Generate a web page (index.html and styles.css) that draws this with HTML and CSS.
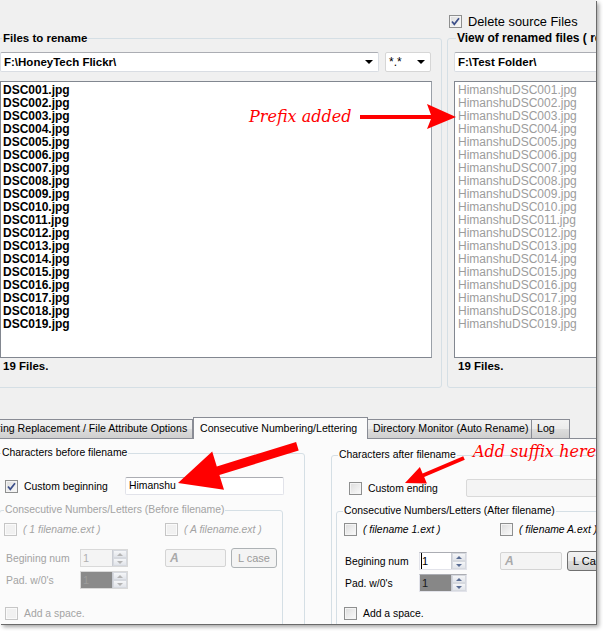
FILE: index.html
```html
<!DOCTYPE html>
<html lang="en">
<head>
    <meta charset="UTF-8">
    <title>Bulk File Renamer</title>
    <link rel="stylesheet" href="styles.css">
</head>
<body>
<div class="screen">
    <div class="window">
        <div class="top">
            <fieldset class="group source">
                <legend>Files to rename</legend>
                <div class="path-row">
                    <div class="combo path">F:\HoneyTech Flickr\<span class="drop"></span></div>
                    <div class="combo filter">*.*<span class="drop"></span></div>
                </div>
                <div class="list">
                    <div>DSC001.jpg</div>
                    <div>DSC002.jpg</div>
                    <div>DSC003.jpg</div>
                    <div>DSC004.jpg</div>
                    <div>DSC005.jpg</div>
                    <div>DSC006.jpg</div>
                    <div>DSC007.jpg</div>
                    <div>DSC008.jpg</div>
                    <div>DSC009.jpg</div>
                    <div>DSC010.jpg</div>
                    <div>DSC011.jpg</div>
                    <div>DSC012.jpg</div>
                    <div>DSC013.jpg</div>
                    <div>DSC014.jpg</div>
                    <div>DSC015.jpg</div>
                    <div>DSC016.jpg</div>
                    <div>DSC017.jpg</div>
                    <div>DSC018.jpg</div>
                    <div>DSC019.jpg</div>
                </div>
                <div class="status">19 Files.</div>
            </fieldset>

            <div class="target-col">
                <div class="check-row delete">
                    <span class="cb on"><svg viewBox="0 0 11 11"><path d="M2 5.5l2.3 2.8L9 2.2"/></svg></span>
                    <span>Delete source Files</span>
                </div>
                <fieldset class="group target">
                    <legend>View of renamed files ( read only )</legend>
                    <div class="combo path">F:\Test Folder\</div>
                    <div class="list renamed">
                        <div>HimanshuDSC001.jpg</div>
                        <div>HimanshuDSC002.jpg</div>
                        <div>HimanshuDSC003.jpg</div>
                        <div>HimanshuDSC004.jpg</div>
                        <div>HimanshuDSC005.jpg</div>
                        <div>HimanshuDSC006.jpg</div>
                        <div>HimanshuDSC007.jpg</div>
                        <div>HimanshuDSC008.jpg</div>
                        <div>HimanshuDSC009.jpg</div>
                        <div>HimanshuDSC010.jpg</div>
                        <div>HimanshuDSC011.jpg</div>
                        <div>HimanshuDSC012.jpg</div>
                        <div>HimanshuDSC013.jpg</div>
                        <div>HimanshuDSC014.jpg</div>
                        <div>HimanshuDSC015.jpg</div>
                        <div>HimanshuDSC016.jpg</div>
                        <div>HimanshuDSC017.jpg</div>
                        <div>HimanshuDSC018.jpg</div>
                        <div>HimanshuDSC019.jpg</div>
                    </div>
                    <div class="status">19 Files.</div>
                </fieldset>
            </div>
        </div>

        <div class="tabs">
            <div class="tab t-replace">String Replacement / File Attribute Options</div>
            <div class="tab t-number active">Consecutive Numbering/Lettering</div>
            <div class="tab t-monitor">Directory Monitor (Auto Rename)</div>
            <div class="tab t-log">Log</div>
        </div>

        <div class="page">
            <!-- prefix side -->
            <fieldset class="group chars before">
                <legend>Characters before filename</legend>
                <div class="custom-row">
                    <span class="cb on"><svg viewBox="0 0 11 11"><path d="M2 5.5l2.3 2.8L9 2.2"/></svg></span>
                    <span class="custom-label">Custom beginning</span>
                    <div class="textbox">Himanshu</div>
                </div>
                <fieldset class="group seq disabled">
                    <legend>Consecutive Numbers/Letters (Before filename)</legend>
                    <div class="opts">
                        <div class="opt"><span class="cb dis"></span><i>( 1 filename.ext )</i></div>
                        <div class="opt"><span class="cb dis"></span><i>( A filename.ext )</i></div>
                    </div>
                    <div class="nums">
                        <span class="num-label">Begining num</span>
                        <div class="spin dis"><span class="spin-val">1</span><span class="spin-btns"><b class="up"></b><b class="down"></b></span></div>
                        <div class="letter dis">A</div>
                        <div class="button dis">L case</div>
                        <span class="num-label">Pad. w/0's</span>
                        <div class="spin dis dark"><span class="spin-val">1</span><span class="spin-btns"><b class="up"></b><b class="down"></b></span></div>
                    </div>
                    <div class="space-row"><span class="cb dis"></span><span>Add a space.</span></div>
                </fieldset>
            </fieldset>

            <!-- suffix side -->
            <fieldset class="group chars after">
                <legend>Characters after filename</legend>
                <div class="custom-row">
                    <span class="cb"></span>
                    <span class="custom-label">Custom ending</span>
                    <div class="textbox dis"></div>
                </div>
                <fieldset class="group seq">
                    <legend>Consecutive Numbers/Letters (After filename)</legend>
                    <div class="opts">
                        <div class="opt"><span class="cb"></span><i>( filename 1.ext )</i></div>
                        <div class="opt"><span class="cb"></span><i>( filename A.ext )</i></div>
                    </div>
                    <div class="nums">
                        <span class="num-label">Begining num</span>
                        <div class="spin"><span class="spin-val caret">1</span><span class="spin-btns"><b class="up"></b><b class="down"></b></span></div>
                        <div class="letter dis">A</div>
                        <div class="button">L Case</div>
                        <span class="num-label">Pad. w/0's</span>
                        <div class="spin dark"><span class="spin-val">1</span><span class="spin-btns"><b class="up"></b><b class="down"></b></span></div>
                    </div>
                    <div class="space-row"><span class="cb"></span><span>Add a space.</span></div>
                </fieldset>
            </fieldset>
        </div>
    </div>

    <!-- red callouts drawn over the window -->
    <svg class="marks" width="603" height="631" viewBox="0 0 603 631">
        <polygon points="360,115 431,115 427,104 456,117 427,129 431,119 360,119"/>
        <polygon points="464.8,459.8 424.2,477 426.9,483.5 405,483 419.9,466.9 422.6,473.4 463.2,456.2"/>
        <polygon points="298.7,450.5 219.4,475 224,489.8 178,483 212.2,451.6 216.8,466.4 296.1,442"/>
    </svg>
    <span class="note prefix">Prefix added</span>
    <span class="note suffix">Add suffix here</span>
</div>
</body>
</html>
```

FILE: styles.css
```css
:root {
    --face: #f0f0f0;
    --page: #fbfbfb;
    --group-line: #d5dfe5;
    --field-line: #abadb3;
    --tab-line: #898c95;
    --muted: #a3a3a3;
    --note-red: #ff0000;
}

* {
    margin: 0;
    padding: 0;
    box-sizing: border-box;
}

body {
    margin: 0;
    background: #fff;
    font-family: "Liberation Sans", Arial, sans-serif;
    font-size: 11px;
    color: #000;
}

.screen {
    position: relative;
    width: 603px;
    height: 631px;
    overflow: hidden;
}

.window {
    width: 596px;
    height: 624px;
    background: var(--face);
    overflow: hidden;
    display: flex;
    flex-direction: column;
    box-shadow: 1px 1px 0 #6a6a6a, 3px 3px 4px rgba(0, 0, 0, 0.35);
}

/* ---------- group boxes ---------- */

.group {
    flex-shrink: 0;
    border: 1px solid var(--group-line);
    border-radius: 3px;
    min-width: 0;
    padding: 0;
}

.group > legend {
    padding: 0 1px;
    line-height: 14px;
    white-space: nowrap;
}

/* ---------- top half: source and target lists ---------- */

.top {
    display: flex;
    height: 417px;
    flex-shrink: 0;
}

.source {
    margin: 31px 0 0 -4px;
    width: 446px;
    height: 357px;
    padding: 7px 0 0 3px;
}

.source > legend,
.target > legend {
    margin-left: 2px;
    font-weight: bold;
}

.source > legend {
    font-size: 11.5px;
}

.target > legend {
    font-size: 12px;
}

.path-row {
    display: flex;
    gap: 6px;
    height: 20px;
}

.combo {
    position: relative;
    flex-shrink: 0;
    height: 20px;
    background: #fff;
    border: 1px solid #d9dde3;
    border-top-color: var(--field-line);
    border-radius: 2px;
    padding-left: 3px;
    line-height: 18px;
    font-weight: bold;
    font-size: 11.5px;
    white-space: nowrap;
}

.combo.path {
    width: 379px;
}

.combo.filter {
    width: 46px;
    border-color: #d6d6d6;
    font-weight: normal;
    font-size: 12px;
}

.target .combo.path {
    width: 170px;
}

.drop {
    position: absolute;
    right: 5px;
    top: 7px;
    border-left: 4px solid transparent;
    border-right: 4px solid transparent;
    border-top: 4px solid #000;
}

.list {
    width: 432px;
    height: 277px;
    margin-top: 9px;
    background: #fff;
    border: 1px solid #828790;
    border-right-color: #9aa0a8;
    padding: 2px 0 0 2px;
    font-weight: bold;
    font-size: 12px;
    line-height: 13px;
}

.status {
    margin-top: 1px;
    padding-left: 3px;
    line-height: 14px;
    font-weight: bold;
    font-size: 11.5px;
}

.target-col {
    flex-shrink: 0;
    margin-left: 5px;
    display: flex;
    flex-direction: column;
}

.check-row {
    display: flex;
    align-items: center;
    gap: 6px;
}

.delete {
    margin-top: 14px;
    height: 14px;
    padding-left: 2px;
    font-size: 12.8px;
}

.target {
    margin-top: 3px;
    width: 170px;
    height: 357px;
    padding: 7px 0 0 6px;
}

.list.renamed {
    width: 170px;
    padding-left: 3px;
    font-weight: normal;
    font-size: 12px;
    color: #9c9c9c;
}

.target .status {
    padding-left: 4px;
}

/* ---------- checkboxes ---------- */

.cb {
    flex-shrink: 0;
    width: 13px;
    height: 13px;
    border: 1px solid #8e8f8f;
    background: linear-gradient(135deg, #dcdcdc, #fbfbfb);
    box-shadow: inset 0 0 0 1px #f4f4f4;
    display: flex;
    align-items: center;
    justify-content: center;
}

.cb svg {
    width: 11px;
    height: 11px;
}

.cb path {
    fill: none;
    stroke: #3c4f8a;
    stroke-width: 1.7;
}

.cb.dis {
    border-color: #c6c6c6;
    background: #f1f1f1;
    box-shadow: inset 0 0 0 1px #fafafa;
}

/* ---------- tab strip ---------- */

.tabs {
    display: flex;
    align-items: flex-end;
    height: 21px;
    flex-shrink: 0;
    font-size: 10.6px;
}

.tab {
    flex-shrink: 0;
    height: 19px;
    border: 1px solid var(--tab-line);
    border-bottom: none;
    border-left: none;
    line-height: 17px;
    white-space: nowrap;
    overflow: hidden;
    background: linear-gradient(#f2f2f2, #ebebeb 50%, #dddddd 50%, #cfcfcf);
}

.t-replace {
    margin-left: -20px;
    width: 213px;
    padding-left: 7px;
}

.t-number {
    width: 175px;
    padding-left: 6px;
}

.t-monitor {
    width: 164px;
    padding-left: 5px;
}

.t-log {
    width: 38px;
    padding-left: 5px;
}

.tab.active {
    position: relative;
    z-index: 1;
    height: 22px;
    margin-bottom: -1px;
    border-left: 1px solid var(--tab-line);
    background: var(--page);
    line-height: 20px;
}

/* ---------- tab page ---------- */

.page {
    flex: 1;
    display: flex;
    align-items: flex-start;
    background: var(--page);
    border-top: 1px solid var(--tab-line);
    padding-top: 7px;
    overflow: hidden;
    font-size: 10.4px;
}

.chars {
    height: 200px;
}

.chars.before {
    margin-left: -6px;
    width: 311px;
    padding-left: 5px;
}

.chars.before > legend {
    margin-left: 1px;
}

.chars.after {
    margin: 2px 0 0 26px;
    width: 300px;
    padding-left: 6px;
}

.custom-row {
    display: flex;
    align-items: center;
    height: 18px;
    margin-top: 17px;
}

.custom-row .cb {
    margin-right: 6px;
}

.before .custom-row .cb {
    margin-left: 5px;
}

.after .custom-row .cb {
    margin-left: 11px;
}

.custom-label {
    flex-shrink: 0;
    white-space: nowrap;
}

.before .custom-label {
    width: 101px;
}

.after .custom-label {
    width: 98px;
}

.textbox {
    flex-shrink: 0;
    height: 18px;
    width: 159px;
    background: #fff;
    border: 1px solid #e2e3ea;
    border-top-color: var(--field-line);
    border-radius: 2px;
    padding-left: 3px;
    line-height: 16px;
}

.textbox.dis {
    width: 200px;
    background: #f4f4f4;
    border-color: #d9d9d9;
}

.seq {
    height: 160px;
}

.before .seq {
    margin: 8px 0 0 -1px;
    width: 284px;
    padding-left: 4px;
}

.after .seq {
    margin: 7px 0 0 -2px;
    width: 300px;
    padding-left: 6px;
}

.seq.disabled {
    color: var(--muted);
}

.opts {
    display: grid;
    height: 13px;
}

.before .opts {
    grid-template-columns: 161px auto;
    margin-top: 6px;
}

.after .opts {
    grid-template-columns: 156px auto;
    margin: 5px 0 0 1px;
}

.opt {
    display: flex;
    align-items: center;
    gap: 6px;
    white-space: nowrap;
}

.opt i {
    font-style: italic;
}

.nums {
    display: grid;
    grid-template-rows: 20px 20px;
    row-gap: 2px;
    align-items: center;
}

.before .nums {
    grid-template-columns: 76px 85px 61px auto;
    margin-top: 12px;
}

.after .nums {
    grid-template-columns: 76px 81px 62px auto;
    margin-top: 15px;
}

.num-label {
    padding-left: 2px;
    white-space: nowrap;
}

.spin {
    width: 48px;
    height: 18px;
    display: flex;
    background: #fff;
    border: 1px solid #e2e3ea;
    border-top-color: var(--field-line);
}

.spin-val {
    flex: 1;
    padding-left: 2px;
    line-height: 16px;
    font-size: 11px;
}

.spin-val.caret {
    border-left: 1px solid #000;
    margin-left: 1px;
    padding-left: 0;
}

.spin.dark .spin-val {
    background: #878787;
    color: #1a1a1a;
}

.spin.dis {
    background: #f4f4f4;
    border-color: #d9d9d9;
}

.spin.dis .spin-val {
    color: #b0b0b0;
}

.spin.dis.dark .spin-val {
    background: #8a8a8a;
    color: #9c9c9c;
}

.spin-btns {
    width: 15px;
    display: flex;
    flex-direction: column;
    border-left: 1px solid #c9ccd3;
}

.spin-btns b {
    flex: 1;
    display: flex;
    align-items: center;
    justify-content: center;
    background: linear-gradient(#f5f6f8, #e1e4ea);
    border: 1px solid #d6d9df;
}

.spin-btns b::after {
    content: "";
    border-left: 3px solid transparent;
    border-right: 3px solid transparent;
}

.spin-btns .up::after {
    border-bottom: 3px solid #5a6d93;
}

.spin-btns .down::after {
    border-top: 3px solid #5a6d93;
}

.spin.dis .spin-btns .up::after {
    border-bottom-color: #b4b4b4;
}

.spin.dis .spin-btns .down::after {
    border-top-color: #b4b4b4;
}

.letter {
    height: 18px;
    background: #f4f4f4;
    border: 1px solid #d4d4d4;
    border-radius: 2px;
    padding-left: 4px;
    line-height: 16px;
    font-size: 12px;
    font-weight: bold;
    font-style: italic;
    color: #a9a9a9;
}

.button {
    margin-left: 5px;
    width: 46px;
    height: 20px;
    border: 1px solid #707070;
    border-radius: 3px;
    background: linear-gradient(#f2f2f2, #ebebeb 50%, #dddddd 50%, #cfcfcf);
    text-align: center;
    line-height: 18px;
    font-size: 11px;
    white-space: nowrap;
    overflow: hidden;
}

.button.dis {
    border-color: #adb2b5;
    background: #f4f4f4;
    color: #9a9a9a;
}

.after .button {
    width: 60px;
    text-align: left;
    padding-left: 5px;
}

.space-row {
    display: flex;
    align-items: center;
    gap: 6px;
    height: 13px;
}

.before .space-row {
    margin: 17px 0 0 1px;
}

.after .space-row {
    margin: 14px 0 0 1px;
}

/* ---------- red callouts ---------- */

.marks {
    position: absolute;
    left: 0;
    top: 0;
    pointer-events: none;
}

.marks polygon {
    fill: var(--note-red);
}

.note {
    position: absolute;
    color: var(--note-red);
    font-family: "DejaVu Serif", serif;
    font-style: italic;
    font-size: 16px;
    line-height: 18px;
    white-space: nowrap;
}

.prefix {
    left: 249px;
    top: 108px;
}

.suffix {
    left: 473px;
    top: 443px;
}
```
